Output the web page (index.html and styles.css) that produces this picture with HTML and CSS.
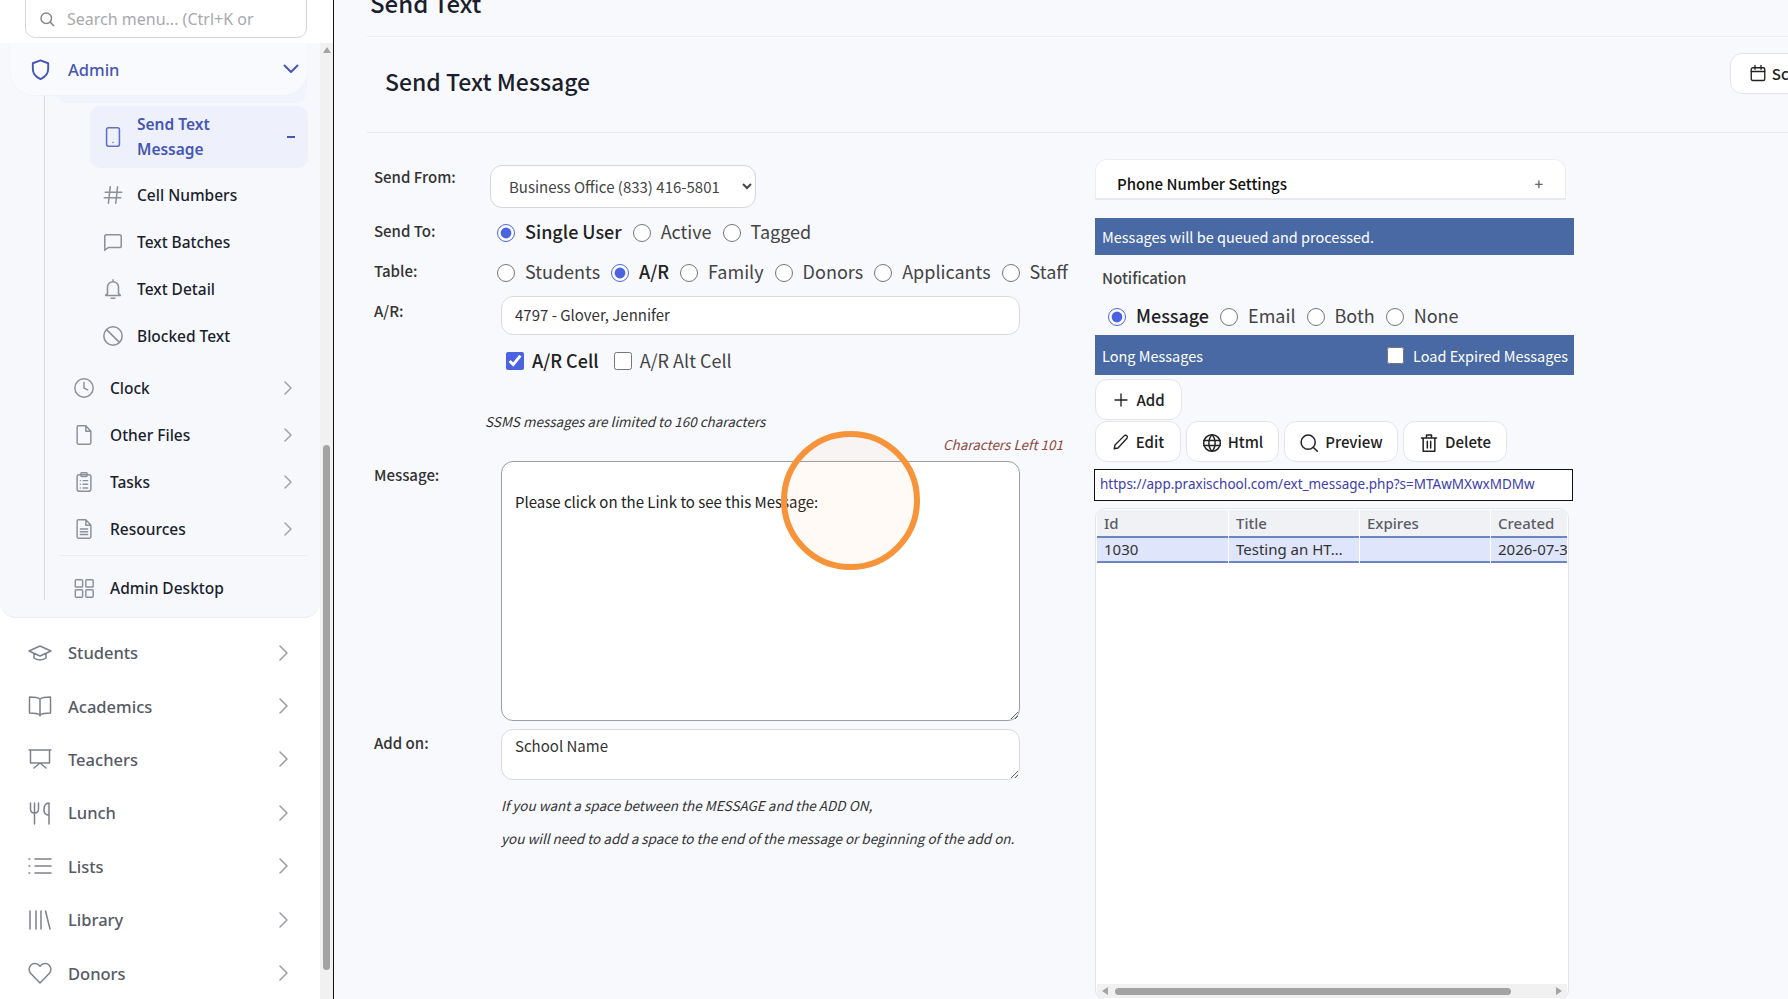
FILE: index.html
```html
<!DOCTYPE html>
<html>
<head>
  <meta charset="utf-8">
  <title>Send Text Message</title>
  <link rel="stylesheet" href="styles.css">
</head>
<body>
<div class="app">

  <aside class="sidebar">
    <div class="search-wrap">
      <div class="search">
        <svg class="ic20" viewBox="0 0 24 24"><circle cx="11" cy="11" r="7"/><path d="M16.2 16.2 21 21"/></svg>
        <span>Search menu... (Ctrl+K or</span>
      </div>
    </div>
    <div class="side-body">
      <nav class="side-nav">
        <div class="admin-panel">
          <div class="admin-head">
            <svg class="ic-admin" viewBox="0 0 24 24"><path d="M12 2.5 20 5.500v6c0 5-3.200 8.500-8 10.500-4.800-2-8-5.500-8-10.500v-6z"/></svg>
            <span class="admin-label">Admin</span>
            <svg class="chev-down" viewBox="0 0 16 10"><path d="M1.500 1.500 8 8l6.500-6.500"/></svg>
          </div>
          <div class="admin-tail"></div>
          <div class="admin-tree">
            <a class="sub-item active">
              <svg class="ic-sub" viewBox="0 0 24 24"><rect x="5" y="2" width="14" height="20" rx="2"/><path d="M12 18h.01"/></svg>
              <span class="sub-text">Send Text Message</span>
              <span class="dash"></span>
            </a>
            <a class="sub-item">
              <svg class="ic-sub" viewBox="0 0 24 24"><path d="M9 3 7 21M17 3l-2 18M3.500 9h18M2.500 15h18"/></svg>
              <span class="sub-text">Cell Numbers</span>
            </a>
            <a class="sub-item">
              <svg class="ic-sub" viewBox="0 0 24 24"><path d="M3 21V6a2 2 0 0 1 2-2h14a2 2 0 0 1 2 2v10a2 2 0 0 1-2 2H7z"/></svg>
              <span class="sub-text">Text Batches</span>
            </a>
            <a class="sub-item">
              <svg class="ic-sub" viewBox="0 0 24 24"><path d="M6 17V10a6 6 0 0 1 12 0v7l2 2H4zM10 22h4M12 2v2"/></svg>
              <span class="sub-text">Text Detail</span>
            </a>
            <a class="sub-item">
              <svg class="ic-sub" viewBox="0 0 24 24"><circle cx="12" cy="12" r="10"/><path d="M5 5l14 14"/></svg>
              <span class="sub-text">Blocked Text</span>
            </a>
            <a class="group-item">
              <svg class="ic-group" viewBox="0 0 24 24"><circle cx="12" cy="12" r="10"/><path d="M12 6v6l4 2"/></svg>
              <span class="group-text">Clock</span>
              <svg class="chev-sm" viewBox="0 0 8 14"><path d="M1 1l6 6-6 6"/></svg>
            </a>
            <a class="group-item">
              <svg class="ic-group" viewBox="0 0 24 24"><path d="M14 2H6a1.500 1.500 0 0 0-1.500 1.500v17A1.500 1.500 0 0 0 6 22h12a1.500 1.500 0 0 0 1.500-1.500V8zM14 2v6h5.500"/></svg>
              <span class="group-text">Other Files</span>
              <svg class="chev-sm" viewBox="0 0 8 14"><path d="M1 1l6 6-6 6"/></svg>
            </a>
            <a class="group-item">
              <svg class="ic-group" viewBox="0 0 24 24"><rect x="4.500" y="4" width="15" height="18" rx="2"/><rect x="8.500" y="2" width="7" height="4" rx="1"/><path d="M8 11h.01M8 15h.01M8 19h.01M11 11h5M11 15h5M11 19h5" transform="translate(0 -.5)"/></svg>
              <span class="group-text">Tasks</span>
              <svg class="chev-sm" viewBox="0 0 8 14"><path d="M1 1l6 6-6 6"/></svg>
            </a>
            <a class="group-item">
              <svg class="ic-group" viewBox="0 0 24 24"><path d="M14 2H6a1.500 1.500 0 0 0-1.500 1.500v17A1.500 1.500 0 0 0 6 22h12a1.500 1.500 0 0 0 1.500-1.500V8zM14 2v6h5.500M8 12h8M8 15h8M8 18h8"/></svg>
              <span class="group-text">Resources</span>
              <svg class="chev-sm" viewBox="0 0 8 14"><path d="M1 1l6 6-6 6"/></svg>
            </a>
            <div class="tree-rule"></div>
            <a class="group-item">
              <svg class="ic-group" viewBox="0 0 24 24"><rect x="2.500" y="3" width="8" height="8" rx="1"/><rect x="14" y="3" width="8" height="8" rx="1"/><rect x="2.500" y="14" width="8" height="8" rx="1"/><rect x="14" y="14" width="8" height="8" rx="1"/></svg>
              <span class="group-text">Admin Desktop</span>
            </a>
          </div>
        </div>

        <div class="top-list">
          <a class="top-item">
            <svg class="ic-top" viewBox="0 0 24 24"><path d="M1 10 12 5l11 5-11 5zM6 12.500V17c3 2.500 9 2.500 12 0v-4.500"/></svg>
            <span>Students</span>
            <svg class="chev-top" viewBox="0 0 9 16"><path d="M1 1l7 7-7 7"/></svg>
          </a>
          <a class="top-item">
            <svg class="ic-top" viewBox="0 0 24 24"><path d="M12 5C10 3.500 7 3 1.500 3v16C7 19 10 19.500 12 21c2-1.500 5-2 10.500-2V3C17 3 14 3.500 12 5zM12 5v17"/></svg>
            <span>Academics</span>
            <svg class="chev-top" viewBox="0 0 9 16"><path d="M1 1l7 7-7 7"/></svg>
          </a>
          <a class="top-item">
            <svg class="ic-top" viewBox="0 0 24 24"><path d="M1 3h22M2.500 3v13h19V3M12 16l-6 5M12 16l6 5"/></svg>
            <span>Teachers</span>
            <svg class="chev-top" viewBox="0 0 9 16"><path d="M1 1l7 7-7 7"/></svg>
          </a>
          <a class="top-item">
            <svg class="ic-top" viewBox="0 0 24 24"><path d="M2.500 2v6c0 3 1.500 4 4 4s4-1 4-4V2M6.500 2v21M21 23V2c-3.500 0-5 3-5 7 0 3 1.500 5 5 5"/></svg>
            <span>Lunch</span>
            <svg class="chev-top" viewBox="0 0 9 16"><path d="M1 1l7 7-7 7"/></svg>
          </a>
          <a class="top-item">
            <svg class="ic-top" viewBox="0 0 24 24"><path d="M7 5h16M7 12h16M7 19h16M1 5h.8M1 12h.8M1 19h.8"/></svg>
            <span>Lists</span>
            <svg class="chev-top" viewBox="0 0 9 16"><path d="M1 1l7 7-7 7"/></svg>
          </a>
          <a class="top-item">
            <svg class="ic-top" viewBox="0 0 24 24"><path d="M2 3v18M8 3v18M13 3v18M17.500 3 22 21"/></svg>
            <span>Library</span>
            <svg class="chev-top" viewBox="0 0 9 16"><path d="M1 1l7 7-7 7"/></svg>
          </a>
          <a class="top-item">
            <svg class="ic-top" viewBox="0 0 24 24"><path d="M12 22 2.800 12.500a6 6 0 0 1 0-8.300 5.800 5.800 0 0 1 8.200 0l1 1 1-1a5.800 5.800 0 0 1 8.200 0 6 6 0 0 1 0 8.300z"/></svg>
            <span>Donors</span>
            <svg class="chev-top" viewBox="0 0 9 16"><path d="M1 1l7 7-7 7"/></svg>
          </a>
        </div>
      </nav>
      <div class="side-scroll">
        <div class="arrow-up"></div>
        <div class="side-thumb"></div>
      </div>
    </div>
  </aside>

  <main class="main">
    <h1 class="page-title">Send Text</h1>
    <div class="card-head">
      <h2>Send Text Message</h2>
      <button class="btn btn-sched">
        <svg class="ic-btn" viewBox="0 0 24 24"><rect x="3" y="5" width="18" height="17" rx="2"/><path d="M3 10h18M8 2v5M16 2v5"/></svg>
        Schedule
      </button>
    </div>

    <div class="columns">
      <section class="col-left">
        <div class="row row-from">
          <label class="lbl lbl-from">Send From:</label>
          <select class="sel"><option>Business Office (833) 416-5801</option></select>
        </div>
        <div class="row row-to">
          <label class="lbl">Send To:</label>
          <div class="choices">
            <label class="opt on"><input type="radio" name="to" checked>Single User</label>
            <label class="opt"><input type="radio" name="to">Active</label>
            <label class="opt"><input type="radio" name="to">Tagged</label>
          </div>
        </div>
        <div class="row row-table">
          <label class="lbl">Table:</label>
          <div class="choices">
            <label class="opt"><input type="radio" name="tb">Students</label>
            <label class="opt on"><input type="radio" name="tb" checked>A/R</label>
            <label class="opt"><input type="radio" name="tb">Family</label>
            <label class="opt"><input type="radio" name="tb">Donors</label>
            <label class="opt"><input type="radio" name="tb">Applicants</label>
            <label class="opt"><input type="radio" name="tb">Staff</label>
          </div>
        </div>
        <div class="row row-ar">
          <label class="lbl">A/R:</label>
          <input class="txt" type="text" value="4797 - Glover, Jennifer">
        </div>
        <div class="cell-checks">
          <label class="opt on"><input type="checkbox" checked>A/R Cell</label>
          <label class="opt"><input type="checkbox">A/R Alt Cell</label>
        </div>
        <p class="note note-limit">SSMS messages are limited to 160 characters</p>
        <p class="chars-left">Characters Left 101</p>
        <div class="row row-msg">
          <label class="lbl">Message:</label>
          <textarea class="area area-msg">Please click on the Link to see this Message:</textarea>
        </div>
        <div class="row row-addon">
          <label class="lbl">Add on:</label>
          <textarea class="area area-addon">School Name</textarea>
        </div>
        <p class="note note-add">If you want a space between the MESSAGE and the ADD ON,</p>
        <p class="note note-add">you will need to add a space to the end of the message or beginning of the add on.</p>
      </section>

      <section class="col-right">
        <div class="phone-card">
          <span>Phone Number Settings</span>
          <span class="plus">+</span>
        </div>
        <div class="banner banner-info">Messages will be queued and processed.</div>
        <div class="notif-title">Notification</div>
        <div class="choices notif-choices">
          <label class="opt on"><input type="radio" name="nt" checked>Message</label>
          <label class="opt"><input type="radio" name="nt">Email</label>
          <label class="opt"><input type="radio" name="nt">Both</label>
          <label class="opt"><input type="radio" name="nt">None</label>
        </div>
        <div class="banner banner-long">
          <span>Long Messages</span>
          <label class="expired"><input type="checkbox">Load Expired Messages</label>
        </div>
        <div class="btn-row btn-row-add">
          <button class="btn btn-add">
            <svg class="ic-btn" viewBox="0 0 24 24"><path d="M12 4v16M4 12h16"/></svg>
            Add
          </button>
        </div>
        <div class="btn-row">
          <button class="btn btn-edit">
            <svg class="ic-btn" viewBox="0 0 24 24"><path d="M16.500 3.500a2.500 2.500 0 0 1 3.500 3.500L8 20l-5 1 1-5z"/></svg>
            Edit
          </button>
          <button class="btn btn-html">
            <svg class="ic-btn ic-lg" viewBox="0 0 24 24"><circle cx="12" cy="12" r="10"/><path d="M2 9h20M2 15h20M12 2c-5 5-5 15 0 20M12 2c5 5 5 15 0 20"/></svg>
            Html
          </button>
          <button class="btn btn-prev">
            <svg class="ic-btn ic-lg" viewBox="0 0 24 24"><circle cx="11" cy="11" r="8.500"/><path d="m17 17 5 5"/></svg>
            Preview
          </button>
          <button class="btn btn-del">
            <svg class="ic-btn ic-lg" viewBox="0 0 24 24"><path d="M3 6h18M9 6V2.500h6V6M5 6v16h14V6M10 10v8M14 10v8"/></svg>
            Delete
          </button>
        </div>
        <div class="url-box">https://app.praxischool.com/ext_message.php?s=MTAwMXwxMDMw</div>
        <div class="grid-box">
          <div class="grid-row grid-header">
            <div class="cell">Id</div><div class="cell">Title</div><div class="cell">Expires</div><div class="cell">Created</div>
          </div>
          <div class="grid-row grid-selected">
            <div class="cell">1030</div><div class="cell">Testing an HT…</div><div class="cell"></div><div class="cell">2026-07-31</div>
          </div>
          <div class="grid-space"></div>
          <div class="grid-scroll">
            <div class="arrow-left"></div>
            <div class="grid-thumb"></div>
            <div class="arrow-right"></div>
          </div>
        </div>
      </section>
    </div>
  </main>
</div>

<div class="click-ring"></div>
</body>
</html>
```

FILE: styles.css
```css
* {
  box-sizing: border-box;
}
html, body {
  margin: 0;
  height: 999px;
  overflow: hidden;
}
body {
  font-family: "Noto Sans CJK JP", "Noto Sans", sans-serif;
  background: #f8f9fd;
  color: #222;
}
svg {
  fill: none;
  stroke: currentColor;
  stroke-width: 2;
  stroke-linecap: round;
  stroke-linejoin: round;
  flex: none;
}
.app {
  display: flex;
  height: 999px;
}

/* sidebar */
.sidebar {
  width: 334px;
  flex: none;
  background: #fff;
  border-right: 1px solid #111;
  display: flex;
  flex-direction: column;
  font-family: "Noto Sans", sans-serif;
  height: 999px;
  overflow: hidden;
}
.search-wrap {
  height: 43px;
  padding: 0 26px 0 25px;
  flex: none;
}
.search {
  height: 39px;
  margin-top: -1px;
  border: 1px solid #d5d7dc;
  border-radius: 0 0 10px 10px;
  display: flex;
  align-items: center;
  gap: 11px;
  padding: 0 12px;
  color: #a7a9ae;
  font-size: 16px;
  white-space: nowrap;
  overflow: hidden;
}
.ic20 {
  width: 18px;
  height: 18px;
  color: #85888f;
}
.side-body {
  display: flex;
  flex: 1;
  min-height: 0;
}
.side-nav {
  width: 320px;
  flex: none;
}
.side-scroll {
  width: 13px;
  background: #f1f1f1;
  position: relative;
}
.arrow-up {
  width: 0;
  margin: 4px auto 0;
  border: 4px solid transparent;
  border-top: 0;
  border-bottom: 6px solid #a3a3a3;
}
.side-thumb {
  width: 7px;
  height: 525px;
  margin: 392px 0 0 3px;
  background: #a3a3a3;
  border-radius: 4px;
}
.admin-panel {
  height: 575px;
  background: #f6f8fc;
  border-radius: 0 0 16px 16px;
  border-bottom: 1px solid #eceef3;
  overflow: hidden;
  position: relative;
}
.admin-head {
  height: 52px;
  margin: 0 13px 0 10px;
  background: #f9fafe;
  border-radius: 0 0 24px 24px;
  box-shadow: 0 1px 2px #f0f2f7;
  display: flex;
  align-items: center;
  padding-left: 19px;
  color: #4656b3;
  position: relative;
  z-index: 1;
}
.ic-admin {
  width: 23px;
  height: 23px;
  margin-right: 16px;
}
.admin-label {
  font-size: 16.500px;
  font-weight: 500;
}
.chev-down {
  width: 16px;
  height: 10px;
  margin-left: auto;
  margin-right: 8px;
}
.admin-tail {
  height: 28px;
  margin: -20px 13px 0 55px;
  background: #f1f4fc;
  border-radius: 0 0 12px 12px;
}
.admin-tree {
  margin-left: 44px;
  margin-top: -20px;
  padding-top: 23px;
  border-left: 1px solid #d8dae1;
  height: 517px;
  position: relative;
}
.sub-item {
  display: flex;
  align-items: center;
  height: 47px;
  margin-left: 45px;
  margin-right: 12px;
  padding-left: 12px;
  color: #1b1e2c;
  font-size: 15.500px;
  font-weight: 500;
}
.sub-item.active {
  height: 62px;
  margin-bottom: 3px;
  background: #eef1fb;
  border-radius: 10px;
  color: #4656b3;
  font-weight: 600;
  line-height: 25px;
}
.sub-item.active .sub-text {
  width: 120px;
}
.ic-sub {
  width: 22px;
  height: 22px;
  margin-right: 13px;
  color: #8d909b;
  stroke-width: 1.700;
}
.active .ic-sub {
  color: #6070c4;
}
.dash {
  width: 8px;
  height: 2px;
  background: #4656b3;
  margin-left: auto;
  margin-right: 13px;
}
.group-item {
  display: flex;
  align-items: center;
  height: 47px;
  padding-left: 28px;
  color: #1b1e2c;
  font-size: 15.500px;
  font-weight: 500;
}
.sub-item + .group-item {
  margin-top: 5px;
}
.ic-group {
  width: 22px;
  height: 22px;
  margin-right: 15px;
  color: #8d909b;
  stroke-width: 1.600;
}
.chev-sm {
  width: 8px;
  height: 14px;
  margin-left: auto;
  margin-right: 28px;
  color: #a2a4ab;
  stroke-width: 1.500;
}
.tree-rule {
  height: 1px;
  background: #ebedf2;
  margin: 3px 13px 8px 14px;
}
.top-list {
  margin-top: 8px;
}
.top-item {
  display: flex;
  align-items: center;
  height: 53.400px;
  padding-left: 28px;
  color: #565a66;
  font-size: 16.500px;
  font-weight: 500;
}
.ic-top {
  width: 24px;
  height: 24px;
  margin-right: 16px;
  color: #7e818b;
  stroke-width: 1.500;
}
.chev-top {
  width: 9px;
  height: 16px;
  margin-left: auto;
  margin-right: 32px;
  color: #9a9ca3;
  stroke-width: 1.500;
}

/* main column */
.main {
  flex: 1;
  min-width: 0;
  padding-left: 33px;
  overflow: hidden;
}
.page-title {
  margin: -14px 0 0 3px;
  height: 50px;
  font-size: 24px;
  line-height: 34px;
  font-weight: 500;
  color: #1b1e2c;
}
.card-head {
  position: relative;
  border-top: 1px solid #eceef2;
  border-bottom: 1px solid #e7e9ee;
  height: 97px;
  display: flex;
  align-items: center;
  justify-content: space-between;
  padding-left: 18px;
  overflow: hidden;
  margin-right: -4px;
}
.card-head h2 {
  margin: 0 0 8px;
  font-size: 23px;
  font-weight: 500;
  color: #1b1e2c;
}
.btn-sched {
  flex: none;
  width: 110px;
  height: 39px;
  margin-right: -48px;
  margin-bottom: 23px;
  justify-content: flex-start;
}
.columns {
  display: grid;
  grid-template-columns: 696px 480px;
  gap: 32px;
  padding-top: 26px;
}

/* left form */
.col-left {
  padding: 6px 0 0 7px;
}
.row {
  display: flex;
  align-items: flex-start;
}
.lbl {
  width: 127px;
  flex: none;
  font-size: 15px;
  line-height: 22px;
  font-weight: 500;
  color: #333;
}
.lbl-from {
  width: 116px;
  padding-top: 1px;
}
.sel {
  width: 266px;
  height: 43px;
  border: 1px solid #d5d7dc;
  border-radius: 12px;
  background-color: #fff;
  padding: 0 9px 0 14px;
  font: 15px "Noto Sans CJK JP", sans-serif;
  color: #444;
}
.row-to {
  margin-top: 12px;
  height: 22px;
}
.row-table {
  margin-top: 18px;
  height: 22px;
}
.row-to .lbl,
.row-table .lbl {
  width: 123px;
}
.choices {
  display: flex;
  gap: 11px;
}
.opt {
  display: flex;
  align-items: center;
  font-size: 18px;
  line-height: 22px;
  color: #444;
  white-space: nowrap;
}
.opt.on {
  font-weight: 500;
  color: #222;
}
.opt input {
  margin: 4px 10px 0 0;
  width: 18px;
  height: 18px;
  accent-color: #4a63e0;
}
.row-ar {
  margin-top: 14px;
}
.row-ar .lbl {
  margin-top: 4px;
}
.txt {
  width: 519px;
  height: 39px;
  border: 1px solid #d9dbe0;
  border-radius: 12px;
  background: #fff;
  padding: 0 13px 3px;
  font: 15px "Noto Sans CJK JP", sans-serif;
  color: #333;
}
.cell-checks {
  display: flex;
  gap: 15px;
  margin: 14px 0 0 132px;
  height: 22px;
}
.cell-checks input {
  margin: 2px 8px 0 0;
}
.note {
  margin: 0;
  font-size: 13.500px;
  line-height: 20px;
  font-style: italic;
  color: #333;
}
.note-limit {
  margin: 40px 0 0 111px;
}
.chars-left {
  margin: 3px 0 0;
  text-align: right;
  font-size: 13.500px;
  line-height: 20px;
  font-style: italic;
  color: #8c4a3c;
}
.row-msg {
  margin-top: 7px;
}
.row-msg .lbl {
  margin-top: 3px;
}
.area {
  width: 519px;
  border-radius: 12px;
  background: #fff;
  font: 15px/22px "Noto Sans CJK JP", sans-serif;
  color: #222;
  padding: 8px 13px;
  resize: vertical;
  outline: none;
}
.area-msg {
  height: 260px;
  border: 1px solid #9a9da3;
  padding-top: 29px;
}
.row-addon {
  margin-top: 8px;
}
.row-addon .lbl {
  margin-top: 3px;
}
.area-addon {
  height: 51px;
  border: 1px solid #d9dbe0;
  padding-top: 5px;
  color: #333;
}
.note-add {
  margin: 0 0 13px 127px;
}
.row-addon + .note-add {
  margin-top: 15px;
}

/* right column */
.phone-card {
  width: 471px;
  height: 41px;
  background: #fff;
  border: 1px solid #eceef2;
  border-bottom: 2px solid #e7e9ee;
  border-radius: 12px 12px 0 0;
  padding: 13px 22px 0 21px;
  display: flex;
  justify-content: space-between;
  font-size: 15px;
  line-height: 22px;
  font-weight: 500;
  color: #111;
}
.plus {
  color: #666;
}
.banner {
  width: 479px;
  background: #4869a3;
  color: #fff;
  font-size: 14.500px;
  display: flex;
  align-items: center;
  justify-content: space-between;
  padding: 0 6px 0 7px;
}
.banner-info {
  height: 37px;
  margin-top: 18px;
}
.banner-long {
  height: 40px;
}
.notif-title {
  margin: 13px 0 0 7px;
  font-size: 15px;
  line-height: 20px;
  font-weight: 500;
  color: #444;
}
.notif-choices {
  margin: 16px 0 9px 13px;
}
.expired {
  display: flex;
  align-items: center;
  font-size: 14.500px;
}
.expired input {
  width: 17px;
  height: 17px;
  margin: 0 9px 0 0;
}
.btn-row {
  display: flex;
  gap: 5px;
}
.btn-row-add {
  margin: 4px 0 1px;
}
.btn {
  display: flex;
  align-items: center;
  justify-content: center;
  gap: 6px;
  height: 41px;
  background: #fff;
  border: 1px solid #e3e5ea;
  border-radius: 12px;
  font: 500 15px "Noto Sans CJK JP", sans-serif;
  color: #222;
  padding: 0;
  white-space: nowrap;
}
.btn-sched {
  padding-left: 17px;
  gap: 5px;
}
.ic-btn {
  width: 18px;
  height: 18px;
  stroke-width: 1.800;
}
.ic-lg {
  width: 20px;
  height: 20px;
  margin-top: 3px;
}
.btn-add {
  width: 87px;
}
.btn-edit {
  width: 86px;
}
.btn-html {
  width: 93px;
}
.btn-prev {
  width: 114px;
}
.btn-del {
  width: 104px;
}
.url-box {
  width: 479px;
  height: 32px;
  margin: 7px 0 7px -1px;
  border: 1px solid #111;
  background: #fff;
  padding: 0 5px;
  font: 13.500px/28px "Noto Sans", sans-serif;
  color: #3d3dab;
  white-space: nowrap;
}
.grid-box {
  width: 474px;
  height: 492px;
  background: #fff;
  border: 1px solid #e3e5ea;
  border-radius: 10px;
  padding: 1px;
  display: flex;
  flex-direction: column;
  overflow: hidden;
  font-family: "Noto Sans", sans-serif;
  font-size: 15px;
}
.grid-row {
  display: grid;
  grid-template-columns: 131px 130px 130px 80px;
  gap: 1px;
  overflow: hidden;
}
.cell {
  padding-left: 7px;
  white-space: nowrap;
  overflow: hidden;
}
.grid-header .cell {
  height: 28px;
  line-height: 26px;
  background: #f0f1f5;
  border-bottom: 2px solid #6a85c0;
  font-weight: 500;
  color: #5a5d66;
}
.grid-selected .cell {
  height: 25px;
  line-height: 23px;
  background: #dfe5fb;
  border-bottom: 2px solid #6a85c0;
  color: #333;
}
.grid-space {
  flex: 1;
}
.grid-scroll {
  height: 14px;
  flex: none;
  background: #f1f1f1;
  display: flex;
  align-items: center;
  padding: 0 5px;
}
.arrow-left {
  border: 4px solid transparent;
  border-left: 0;
  border-right: 6px solid #a3a3a3;
}
.grid-thumb {
  width: 396px;
  height: 7px;
  margin-left: 7px;
  background: #a3a3a3;
  border-radius: 4px;
}
.arrow-right {
  margin-left: auto;
  border: 4px solid transparent;
  border-right: 0;
  border-left: 6px solid #a3a3a3;
}

/* click marker drawn over the page */
.click-ring {
  position: absolute;
  left: 781px;
  top: 431px;
  width: 139px;
  height: 139px;
  border: 6px solid #f7943a;
  border-radius: 50%;
  background: rgba(247, 148, 58, 0.05);
}
```
